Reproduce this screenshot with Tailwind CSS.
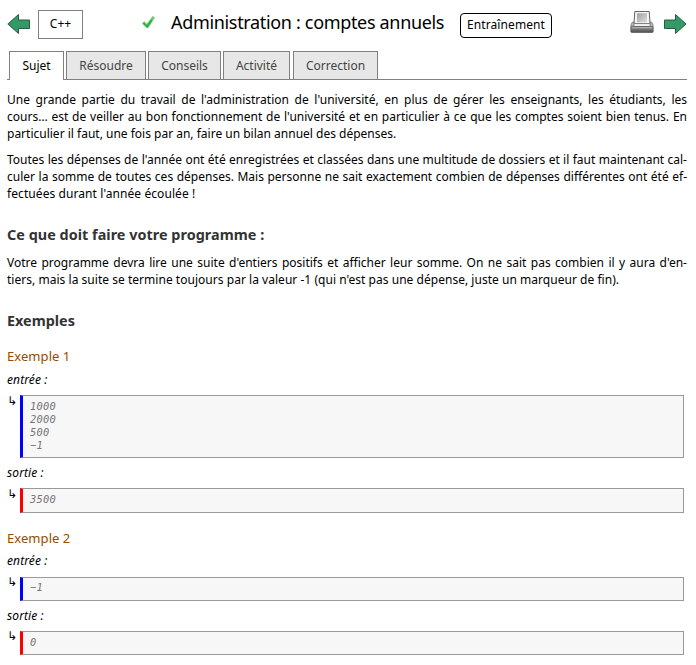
<!DOCTYPE html>
<html lang="fr">
<head>
<meta charset="utf-8">
<title>Administration : comptes annuels</title>
<script src="https://cdn.jsdelivr.net/npm/@tailwindcss/browser@4"></script>
</head>
<body class="bg-white">
<div class="w-[696px] h-[665px] overflow-hidden bg-white pl-[7px] pr-[9px] font-['Noto_Sans',sans-serif] text-[12px] leading-[17px] text-black">
  <header class="flex h-[51px] items-start">
    <svg class="mt-[13px] h-[22px] w-[24px] shrink-0" viewBox="0 0 24 22"><path d="M.8 11 11.500 1.500V7H22.500V15.500H11.500V20.500Z" fill="#339966" stroke="#2b5b45"/></svg>
    <div class="mt-[10px] ml-[7px] flex h-[29px] w-[45px] shrink-0 items-center justify-center border border-[#808080] pb-[2px]">C++</div>
    <svg class="mt-[14px] ml-[58px] h-[16px] w-[16px] shrink-0" viewBox="0 0 16 16"><path d="M1 9.400 3.200 7.300 5.800 9.800 11.800 2 14 3.400 7.300 14 5.500 14Z" fill="#6ccb70"/><path d="M2.500 9.200 6.200 12.500 10.800 6" fill="none" stroke="#2eaa3c" stroke-width="1.500"/></svg>
    <h1 class="mt-[10px] ml-[14px] w-[275px] shrink-0 text-[18px] leading-[24px] tracking-[-0.33px] whitespace-nowrap">Administration : comptes annuels</h1>
    <div class="mt-[13px] ml-[14px] flex h-[25px] w-[92px] shrink-0 items-center justify-center rounded-[4px] border border-black pb-[3px] tracking-[0.1px]">Entraînement</div>
    <svg class="mt-[10px] ml-auto h-[24px] w-[24px] shrink-0" viewBox="0 0 24 24">
      <defs>
        <linearGradient id="body" x1="0" y1="0" x2="0" y2="1"><stop offset="0" stop-color="#999"/><stop offset="1" stop-color="#4d4d4d"/></linearGradient>
        <linearGradient id="paper" x1="0" y1="0" x2="1" y2="1"><stop offset="0" stop-color="#a0a0a0"/><stop offset="1" stop-color="#ddd"/></linearGradient>
      </defs>
      <path d="M1 14.500 2.500 12H21.500L23 14.500V18H1Z" fill="#b5b5b5" stroke="#777" stroke-width=".8"/>
      <path d="M4 13.500 4.800 1.500H19.200L20 13.500Z" fill="#f5f5f5" stroke="#666" stroke-width="1"/>
      <path d="M7 3.200H17V12.300H7Z" fill="url(#paper)"/>
      <path d="M4 13.500H20V16.600H4Z" fill="#eee" stroke="#666" stroke-width=".6"/>
      <rect x=".8" y="16.500" width="22.400" height="6" rx="1" fill="url(#body)" stroke="#555" stroke-width=".7"/>
      <path d="M2 17.700H22" stroke="#c4c4c4" stroke-width=".8"/>
    </svg>
    <svg class="mt-[13px] ml-[9px] h-[22px] w-[24px] shrink-0" viewBox="0 0 24 22"><path d="M23 11 12.500 1.500V7H1.500V15.500H12.500V20.500Z" fill="#339966" stroke="#2b5b45"/></svg>
  </header>

  <nav class="flex h-[29px] gap-[2px] border-b border-[#808080] pl-[2px] text-[#444]">
    <div class="-mb-px flex h-[29px] w-[55px] items-center justify-center border border-b-0 border-[#808080] bg-white pb-[2px] text-black">Sujet</div>
    <div class="flex w-[80px] items-center justify-center border border-b-0 border-[#808080] bg-[#e7e7e7]">Résoudre</div>
    <div class="flex w-[73px] items-center justify-center border border-b-0 border-[#808080] bg-[#e7e7e7]">Conseils</div>
    <div class="flex w-[67px] items-center justify-center border border-b-0 border-[#808080] bg-[#e7e7e7]">Activité</div>
    <div class="ml-px flex w-[85px] items-center justify-center border border-b-0 border-[#808080] bg-[#e7e7e7]">Correction</div>
  </nav>

  <main>
    <p class="mt-[11px] w-[680px] whitespace-nowrap">
      <span class="block [text-align-last:justify]">Une grande partie du travail de l'administration de l'université, en plus de gérer les enseignants, les étudiants, les</span>
      <span class="block [text-align-last:justify]">cours… est de veiller au bon fonctionnement de l'université et en particulier à ce que les comptes soient bien tenus. En</span>
      <span class="block">particulier il faut, une fois par an, faire un bilan annuel des dépenses.</span>
    </p>
    <p class="mt-[9px] w-[680px] whitespace-nowrap">
      <span class="block [text-align-last:justify]">Toutes les dépenses de l'année ont été enregistrées et classées dans une multitude de dossiers et il faut maintenant cal-</span>
      <span class="block [text-align-last:justify]">culer la somme de toutes ces dépenses. Mais personne ne sait exactement combien de dépenses différentes ont été ef-</span>
      <span class="block tracking-[0.08px]">fectuées durant l'année écoulée !</span>
    </p>
    <h2 class="mt-[23px] text-[14.4px] leading-[20px] font-bold tracking-[0.03px] text-[#333]">Ce que doit faire votre programme :</h2>
    <p class="mt-[9px] w-[680px] whitespace-nowrap">
      <span class="block [text-align-last:justify]">Votre programme devra lire une suite d'entiers positifs et afficher leur somme. On ne sait pas combien il y aura d'en-</span>
      <span class="block tracking-[0.03px]">tiers, mais la suite se termine toujours par la valeur -1 (qui n'est pas une dépense, juste un marqueur de fin).</span>
    </p>
    <h2 class="mt-[23px] text-[14.4px] leading-[20px] font-bold text-[#333]">Exemples</h2>

    <h3 class="mt-[16px] text-[13px] leading-[18px] tracking-[0.06px] text-[#964b00]">Exemple 1</h3>
    <div class="mt-[6px] tracking-[0.1px] italic">entrée :</div>
    <div class="mt-[7px] flex">
      <span class="-mt-[2px] w-[13px] shrink-0 font-['DejaVu_Sans',sans-serif]">↳</span>
      <pre class="h-[63px] w-[664px] border border-l-[3px] border-[#999] border-l-[#00f] bg-[#f7f7f7] pt-[4px] pl-[7px] font-['DejaVu_Sans_Mono',monospace] text-[10.4px] leading-[13px] tracking-[0.25px] text-[#777] italic">1000
2000
500
−1</pre>
    </div>
    <div class="mt-[6px] tracking-[0.1px] italic">sortie :</div>
    <div class="mt-[7px] flex">
      <span class="-mt-[2px] w-[13px] shrink-0 font-['DejaVu_Sans',sans-serif]">↳</span>
      <pre class="h-[25px] w-[664px] border border-l-[3px] border-[#999] border-l-[#f00] bg-[#f7f7f7] pt-[4px] pl-[7px] font-['DejaVu_Sans_Mono',monospace] text-[10.4px] leading-[13px] tracking-[0.25px] text-[#777] italic">3500</pre>
    </div>

    <h3 class="mt-[16px] text-[13px] leading-[18px] tracking-[0.06px] text-[#964b00]">Exemple 2</h3>
    <div class="mt-[5px] tracking-[0.1px] italic">entrée :</div>
    <div class="mt-[8px] flex">
      <span class="-mt-[3px] w-[13px] shrink-0 font-['DejaVu_Sans',sans-serif]">↳</span>
      <pre class="h-[24px] w-[664px] border border-l-[3px] border-[#999] border-l-[#00f] bg-[#f7f7f7] pt-[3px] pl-[7px] font-['DejaVu_Sans_Mono',monospace] text-[10.4px] leading-[13px] tracking-[0.25px] text-[#777] italic">−1</pre>
    </div>
    <div class="mt-[6px] tracking-[0.1px] italic">sortie :</div>
    <div class="mt-[7px] flex">
      <span class="-mt-[3px] w-[13px] shrink-0 font-['DejaVu_Sans',sans-serif]">↳</span>
      <pre class="h-[24px] w-[664px] border border-l-[3px] border-[#999] border-l-[#f00] bg-[#f7f7f7] pt-[4px] pl-[7px] font-['DejaVu_Sans_Mono',monospace] text-[10.4px] leading-[13px] tracking-[0.25px] text-[#777] italic">0</pre>
    </div>
  </main>
</div>
</body>
</html>
